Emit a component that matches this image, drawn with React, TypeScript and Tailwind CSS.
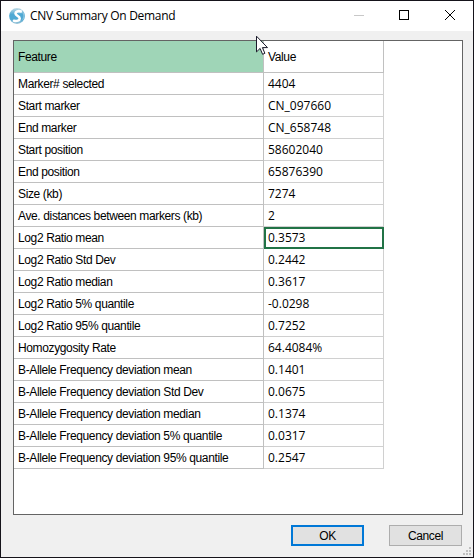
const rows: [string, string][] = [
  ['Marker# selected', '4404'],
  ['Start marker', 'CN_097660'],
  ['End marker', 'CN_658748'],
  ['Start position', '58602040'],
  ['End position', '65876390'],
  ['Size (kb)', '7274'],
  ['Ave. distances between markers (kb)', '2'],
  ['Log2 Ratio mean', '0.3573'],
  ['Log2 Ratio Std Dev', '0.2442'],
  ['Log2 Ratio median', '0.3617'],
  ['Log2 Ratio 5% quantile', '-0.0298'],
  ['Log2 Ratio 95% quantile', '0.7252'],
  ['Homozygosity Rate', '64.4084%'],
  ['B-Allele Frequency deviation mean', '0.1401'],
  ['B-Allele Frequency deviation Std Dev', '0.0675'],
  ['B-Allele Frequency deviation median', '0.1374'],
  ['B-Allele Frequency deviation 5% quantile', '0.0317'],
  ['B-Allele Frequency deviation 95% quantile', '0.2547'],
];

const SELECTED_ROW = 7;

function AppLogo() {
  return (
    <svg width="16" height="17" viewBox="0 0 16 17">
      <defs>
        <linearGradient id="globe" x1="0" y1="0" x2="0" y2="1">
          <stop offset="0" stopColor="#c3dce6" />
          <stop offset="0.4" stopColor="#4fa9d4" />
          <stop offset="0.7" stopColor="#4fa9d4" />
          <stop offset="1" stopColor="#9cc4d6" />
        </linearGradient>
      </defs>
      <circle cx="8" cy="8" r="7.900" fill="url(#globe)" />
      <path d="M12 3.500C9 2.600 6.500 3.600 6.500 5.600c0 2.400 4.200 2.400 4.200 4.900 0 2-2.700 3-5.700 2.300" fill="none" stroke="#fff" strokeWidth="2.600" strokeLinecap="round" />
      <path d="M13.200 3c2 2.600 2.200 6 .4 8.800" fill="none" stroke="#8dc4de" strokeWidth="1.200" />
    </svg>
  );
}

function TitleBar() {
  return (
    <header className="flex h-[30px] shrink-0 items-center bg-white pl-2">
      <AppLogo />
      <h1 className="ml-[5px] flex-1 whitespace-nowrap font-['Open_Sans','Noto_Sans',sans-serif] text-[12px] leading-[16px] tracking-[-0.29px]">
        CNV Summary On Demand
      </h1>
      <div className="flex h-full">
        <svg width="46" height="30" viewBox="0 0 46 30" shapeRendering="crispEdges">
          <path d="M19 14.500h10" stroke="#c8c8c8" />
        </svg>
        <svg width="46" height="30" viewBox="0 0 46 30" shapeRendering="crispEdges">
          <rect x="18.500" y="9.500" width="9" height="9" fill="none" stroke="#000" />
        </svg>
        <svg width="46" height="30" viewBox="0 0 46 30">
          <path d="M18 9l10 10M28 9l-10 10" stroke="#000" fill="none" />
        </svg>
      </div>
    </header>
  );
}

function MouseCursor() {
  return (
    <svg className="absolute left-[255px] top-[34px]" width="13" height="21" viewBox="0 0 13 21">
      <path d="M.5 1.200v15.700l3.600-3.500 2.500 5.900 2.300-1-2.500-5.700h5.100Z" fill="#fff" stroke="#1a1a2a" />
    </svg>
  );
}

function SizeGrip() {
  return (
    <svg className="absolute bottom-[2px] right-[2px]" width="8" height="8" viewBox="0 0 8 8" fill="#bfbfbf" shapeRendering="crispEdges">
      <path d="M6 0h2v2h-2zM3 3h2v2h-2zM6 3h2v2h-2zM0 6h2v2h-2zM3 6h2v2h-2zM6 6h2v2h-2z" />
    </svg>
  );
}

export default function App() {
  return (
    <div className="relative flex h-[558px] w-[474px] flex-col overflow-hidden border border-[#15131a] bg-[#f0f0f0] font-['Liberation_Sans',Arial,sans-serif] text-[12px] leading-[16px] tracking-[-0.37px] text-black">
      <TitleBar />
      <main className="ml-3 mt-[9px] h-[475px] w-[450px] shrink-0 border border-[#646464] bg-white">
        <div className="flex h-8">
          <div className="flex w-[250px] items-center border-b border-r border-[#c0c0c0] bg-[#9fd5b7] pl-1 pt-px">Feature</div>
          <div className="flex w-[120px] items-center border-b border-r border-[#c0c0c0] pl-1 pt-px">Value</div>
        </div>
        {rows.map(([feature, value], i) => (
          <div key={feature} className="flex h-[22px] whitespace-nowrap">
            <div className="flex w-[250px] items-center border-b border-r border-[#c0c0c0] pl-1">{feature}</div>
            <div
              className={
                "flex w-[120px] items-center font-['Open_Sans','Noto_Sans',sans-serif] tracking-normal " +
                (i === SELECTED_ROW ? 'border-2 border-[#217346] pl-[2px]' : 'border-b border-r border-[#d0d0d0] pl-1')
              }
            >
              {value}
            </div>
          </div>
        ))}
      </main>
      <footer className="mr-[11px] mt-[10px] flex justify-end gap-[25px]">
        <button className="h-[21px] w-[73px] border-2 border-[#0078d7] bg-[#e1e1e1] leading-[14px]">OK</button>
        <button className="h-[21px] w-[73px] border border-[#adadad] bg-[#e1e1e1] leading-[14px]">Cancel</button>
      </footer>
      <MouseCursor />
      <SizeGrip />
    </div>
  );
}
